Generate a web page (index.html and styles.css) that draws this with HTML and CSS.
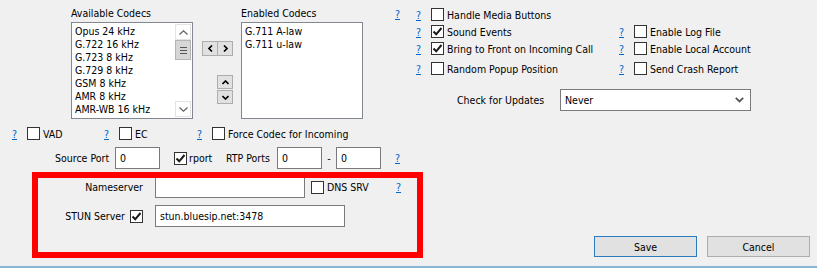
FILE: index.html
```html
<!DOCTYPE html>
<html lang="en">
<head>
  <meta charset="UTF-8">
  <title>Settings</title>
  <link rel="stylesheet" href="styles.css">
</head>
<body>
  <div class="dialog">
    <div class="top">
      <div class="codecs">
        <div class="codec-col">
          <div class="caption">Available Codecs</div>
          <div class="listbox">
            <ul class="items">
              <li>Opus 24 kHz</li>
              <li>G.722 16 kHz</li>
              <li>G.723 8 kHz</li>
              <li>G.729 8 kHz</li>
              <li>GSM 8 kHz</li>
              <li>AMR 8 kHz</li>
              <li>AMR-WB 16 kHz</li>
            </ul>
            <div class="scrollbar">
              <span class="sb-btn"><svg width="9" height="5" viewBox="0 0 9 5"><path d="M0.5 4.5 L4.5 0.8 L8.5 4.5" fill="none" stroke="#606060" stroke-width="1.2"/></svg></span>
              <span class="sb-thumb"><i></i><i></i><i></i></span>
              <span class="sb-track"></span>
              <span class="sb-btn"><svg width="9" height="5" viewBox="0 0 9 5"><path d="M0.5 0.5 L4.5 4.2 L8.5 0.5" fill="none" stroke="#606060" stroke-width="1.2"/></svg></span>
            </div>
          </div>
        </div>
        <div class="mover">
          <div class="pair">
            <button class="mini"><svg width="5" height="7" viewBox="0 0 5 7"><path d="M4 0.5 L1 3.5 L4 6.5" fill="none" stroke="#000" stroke-width="1.6"/></svg></button>
            <button class="mini"><svg width="5" height="7" viewBox="0 0 5 7"><path d="M1 0.5 L4 3.5 L1 6.5" fill="none" stroke="#000" stroke-width="1.6"/></svg></button>
          </div>
          <div class="updown">
            <button class="mini"><svg width="7" height="5" viewBox="0 0 7 5"><path d="M0.5 4 L3.5 1 L6.5 4" fill="none" stroke="#000" stroke-width="1.6"/></svg></button>
            <button class="mini"><svg width="7" height="5" viewBox="0 0 7 5"><path d="M0.5 1 L3.5 4 L6.5 1" fill="none" stroke="#000" stroke-width="1.6"/></svg></button>
          </div>
        </div>
        <div class="codec-col">
          <div class="caption">Enabled Codecs</div>
          <div class="listbox">
            <ul class="items">
              <li>G.711 A-law</li>
              <li>G.711 u-law</li>
            </ul>
          </div>
        </div>
        <a class="help codec-help">?</a>
      </div>

      <div class="options">
        <div class="opt-grid">
          <div class="opt row-1"><a class="help">?</a><span class="cb"></span><span class="lbl">Handle Media Buttons</span></div>
          <div class="opt row-1"></div>
          <div class="opt"><a class="help">?</a><span class="cb checked"><svg width="11" height="11" viewBox="0 0 11 11"><path d="M1.5 5.5 L4.2 8.3 L9.5 2" fill="none" stroke="#1a1a1a" stroke-width="2"/></svg></span><span class="lbl">Sound Events</span></div>
          <div class="opt"><a class="help">?</a><span class="cb"></span><span class="lbl">Enable Log File</span></div>
          <div class="opt"><a class="help">?</a><span class="cb checked"><svg width="11" height="11" viewBox="0 0 11 11"><path d="M1.5 5.5 L4.2 8.3 L9.5 2" fill="none" stroke="#1a1a1a" stroke-width="2"/></svg></span><span class="lbl">Bring to Front on Incoming Call</span></div>
          <div class="opt"><a class="help">?</a><span class="cb"></span><span class="lbl">Enable Local Account</span></div>
          <div class="opt row-4"><a class="help">?</a><span class="cb"></span><span class="lbl">Random Popup Position</span></div>
          <div class="opt row-4"><a class="help">?</a><span class="cb"></span><span class="lbl">Send Crash Report</span></div>
        </div>
        <div class="updates">
          <span class="updates-label">Check for Updates</span>
          <div class="select">
            <span>Never</span>
            <svg width="9" height="6" viewBox="0 0 9 6"><path d="M0.8 0.8 L4.5 4.5 L8.2 0.8" fill="none" stroke="#555" stroke-width="1.8"/></svg>
          </div>
        </div>
      </div>
    </div>

    <div class="flags">
      <div class="flag"><a class="help">?</a><span class="cb"></span><span class="lbl">VAD</span></div>
      <div class="flag"><a class="help">?</a><span class="cb"></span><span class="lbl">EC</span></div>
      <div class="flag"><a class="help">?</a><span class="cb"></span><span class="lbl">Force Codec for Incoming</span></div>
    </div>

    <div class="ports">
      <span class="port-label">Source Port</span>
      <input class="field port" type="text" value="0">
      <span class="cb checked rport-cb"><svg width="11" height="11" viewBox="0 0 11 11"><path d="M1.5 5.5 L4.2 8.3 L9.5 2" fill="none" stroke="#1a1a1a" stroke-width="2"/></svg></span>
      <span class="lbl rport-lbl">rport</span>
      <span class="rtp-label">RTP Ports</span>
      <input class="field port" type="text" value="0">
      <span class="dash">-</span>
      <input class="field port" type="text" value="0">
      <a class="help ports-help">?</a>
    </div>

    <div class="field-row">
      <span class="field-label">Nameserver</span>
      <input class="field ns" type="text" value="">
      <span class="cb dns-cb"></span>
      <span class="lbl dns-lbl">DNS SRV</span>
      <a class="help">?</a>
    </div>

    <div class="field-row stun-row">
      <span class="field-label">STUN Server<span class="cb checked stun-cb"><svg width="11" height="11" viewBox="0 0 11 11"><path d="M1.5 5.5 L4.2 8.3 L9.5 2" fill="none" stroke="#1a1a1a" stroke-width="2"/></svg></span></span>
      <input class="field stun" type="text" value="stun.bluesip.net:3478">
    </div>

    <div class="actions">
      <button class="btn default">Save</button>
      <button class="btn">Cancel</button>
    </div>

    <div class="highlight"></div>
  </div>
</body>
</html>
```

FILE: styles.css
```css
* { box-sizing: border-box; }
body { margin: 0; background: #f0f0f0; font-family: "DejaVu Sans Condensed", "Liberation Sans", sans-serif; font-size: 10.5px; color: #000; }
.dialog { position: relative; width: 817px; height: 268px; border-bottom: 2px solid #86b6d2; overflow: hidden; }

.help { display: inline-block; width: 15px; color: #0066cc; text-decoration: underline; cursor: pointer; }
.cb { display: inline-flex; align-items: center; justify-content: center; width: 13px; height: 13px; background: #fff; border: 1px solid #333; flex: none; }
.lbl { margin-left: 3px; white-space: nowrap; }

/* top area: codec lists + option checkboxes */
.top { display: flex; height: 120px; }
.codecs { display: flex; padding-left: 71px; padding-top: 6px; width: 416px; flex: none; }
.caption { height: 16px; line-height: 14px; }
.listbox { display: flex; width: 122px; height: 97px; background: #fff; border: 1px solid #828790; overflow: hidden; }
.items { list-style: none; margin: 0; padding: 2px 0 0 3px; flex: 1; }
.items li { height: 13px; line-height: 13px; white-space: nowrap; }
.scrollbar { display: flex; flex-direction: column; width: 17px; padding: 1px 1px 1px 0; }
.sb-btn { display: flex; align-items: center; justify-content: center; height: 16px; border: 1px solid #e3e3e3; }
.sb-thumb { display: flex; flex-direction: column; align-items: center; justify-content: center; gap: 2px; height: 20px; background: #d6d6d6; border: 1px solid #b4b4b4; }
.sb-thumb i { display: block; width: 7px; height: 1px; background: #555; }
.sb-track { flex: 1; }

.mover { display: flex; flex-direction: column; align-items: flex-end; width: 48px; padding-top: 35px; padding-right: 8px; }
.pair { display: flex; }
.updown { display: flex; flex-direction: column; gap: 1px; margin-top: 19px; }
.mini { display: flex; align-items: center; justify-content: center; width: 16px; height: 15px; padding: 0; margin: 0; background: #e1e1e1; border: 1px solid #adadad; }
.pair .mini + .mini { margin-left: -1px; }
.updown .mini { height: 14px; }
.codec-help { margin-left: 32px; margin-top: 2px; height: 14px; }

.options { padding-top: 8px; }
.opt-grid { display: grid; grid-template-columns: 203px auto; row-gap: 4px; }
.opt { display: flex; align-items: center; height: 13px; }
.opt.row-4 { margin-top: 3px; }
.updates { display: flex; align-items: center; margin-top: 14px; padding-left: 41px; }
.updates-label { width: 103px; }
.select { display: flex; align-items: center; justify-content: space-between; width: 191px; height: 22px; padding: 0 6px 0 4px; background: #fff; border: 1px solid #7a7a7a; }

/* middle rows */
.flags { display: flex; margin-top: 7px; padding-left: 12px; height: 13px; }
.flag { display: flex; align-items: center; }
.flag:nth-child(1) { width: 92px; }
.flag:nth-child(2) { width: 93px; }

.ports { display: flex; align-items: center; margin-top: 7px; padding-left: 55px; height: 22px; }
.port-label { width: 60px; }
.field { height: 22px; padding: 0 0 0 4px; font: inherit; color: #000; background: #fff; border: 1px solid #7a7a7a; outline: none; }
.port { width: 45px; }
.rport-cb { margin-left: 14px; }
.rport-lbl { width: 37px; margin-left: 2px; }
.rtp-label { width: 51px; }
.dash { width: 14px; text-align: center; }
.ports-help { margin-left: 14px; }

.field-row { display: flex; align-items: center; margin-top: 7px; height: 22px; }
.field-label { display: flex; align-items: center; justify-content: flex-end; width: 143px; margin-right: 12px; }
.ns { width: 150px; }
.dns-cb { margin-left: 6px; }
.dns-lbl { width: 69px; }
.stun-cb { margin-left: 5px; }
.stun { width: 190px; }

.actions { display: flex; justify-content: flex-end; gap: 10px; margin-top: 9px; padding-right: 7px; }
.btn { width: 103px; height: 21px; padding: 0; font: inherit; color: #000; background: #e1e1e1; border: 1px solid #adadad; }
.btn.default { border-color: #2b7bc0; }

/* annotation drawn over the form */
.highlight { position: absolute; left: 32px; top: 172px; width: 391px; height: 86px; border: 6px solid #ff0000; }
```
